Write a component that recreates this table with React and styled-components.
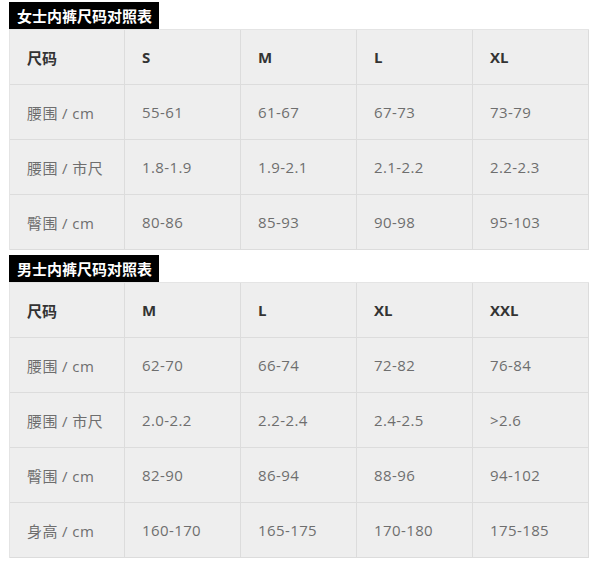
import React from 'react'
import styled, { createGlobalStyle } from 'styled-components'

const GlobalStyle = createGlobalStyle`
  body {
    margin: 0;
    background: #fff;
    font-family: "Open Sans", "Noto Sans CJK SC", sans-serif;
  }
`

const women = {
  title: '女士内裤尺码对照表',
  head: ['尺码', 'S', 'M', 'L', 'XL'],
  rows: [
    ['腰围 / cm', '55-61', '61-67', '67-73', '73-79'],
    ['腰围 / 市尺', '1.8-1.9', '1.9-2.1', '2.1-2.2', '2.2-2.3'],
    ['臀围 / cm', '80-86', '85-93', '90-98', '95-103'],
  ],
}

const men = {
  title: '男士内裤尺码对照表',
  head: ['尺码', 'M', 'L', 'XL', 'XXL'],
  rows: [
    ['腰围 / cm', '62-70', '66-74', '72-82', '76-84'],
    ['腰围 / 市尺', '2.0-2.2', '2.2-2.4', '2.4-2.5', '>2.6'],
    ['臀围 / cm', '82-90', '86-94', '88-96', '94-102'],
    ['身高 / cm', '160-170', '165-175', '170-180', '175-185'],
  ],
}

function SizeTable({ data }) {
  return (
    <Section>
      <Title>{data.title}</Title>
      <Table>
        <Row>
          {data.head.map((h, i) => (
            <Cell key={i} $head>{h}</Cell>
          ))}
        </Row>
        {data.rows.map((r, i) => (
          <Row key={i}>
            {r.map((c, j) => (
              <Cell key={j}>{c}</Cell>
            ))}
          </Row>
        ))}
      </Table>
    </Section>
  )
}

export default function App() {
  return (
    <Page>
      <GlobalStyle />
      <SizeTable data={women} />
      <SizeTable data={men} />
    </Page>
  )
}

const Page = styled.div`
  width: 600px;
  padding: 2px 0 0 9px;
  box-sizing: border-box;
  display: flex;
  flex-direction: column;
  gap: 5px;
`

const Section = styled.div`
  display: flex;
  flex-direction: column;
`

const Title = styled.div`
  align-self: flex-start;
  background: #000;
  color: #fff;
  font-weight: bold;
  font-size: 15px;
  height: 27px;
  line-height: 28px;
  padding: 0 7px 0 8px;
  letter-spacing: 0;
`

const Table = styled.div`
  width: 579px;
  background: #eeeeee;
  border-left: 1px solid #e4e4e4;
  border-top: 1px solid #e4e4e4;
`

const Row = styled.div`
  display: grid;
  grid-template-columns: 115px 116px 116px 116px 116px;
  height: 55px;
`

const Cell = styled.div`
  display: flex;
  align-items: center;
  padding-left: 17px;
  border-right: 1px solid #dcdcdc;
  border-bottom: 1px solid #dcdcdc;
  font-size: 15px;
  color: ${(p) => (p.$head ? '#333' : '#6e6e6e')};
  font-weight: ${(p) => (p.$head ? 'bold' : 'normal')};
  letter-spacing: ${(p) => (p.$head ? '0' : '0.4px')};
  white-space: nowrap;
`
